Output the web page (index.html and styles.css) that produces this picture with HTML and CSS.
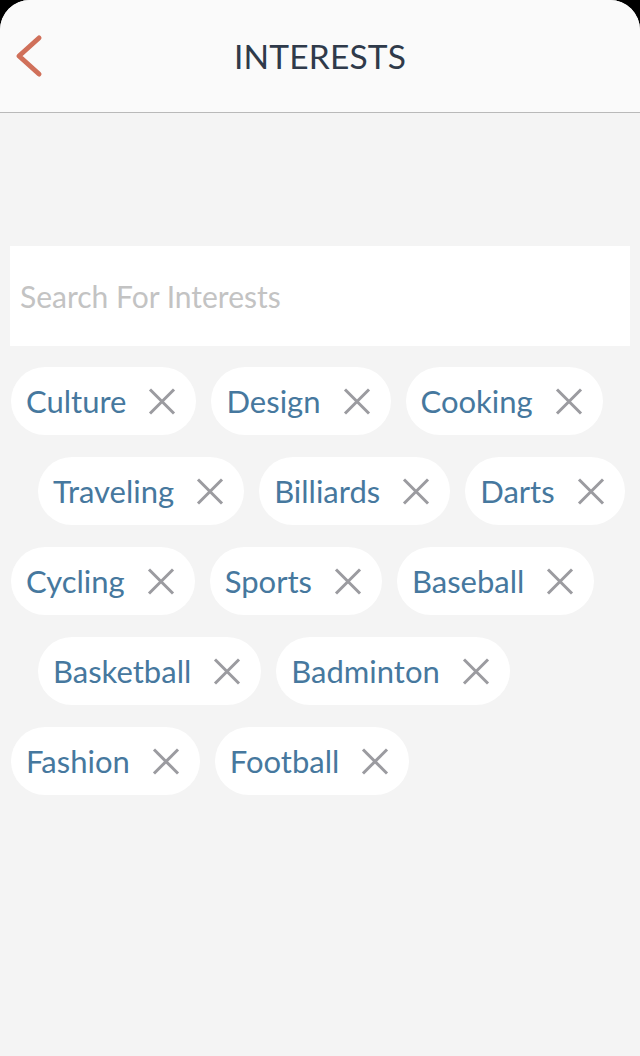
FILE: index.html
```html
<!DOCTYPE html>
<html lang="en">
<head>
  <meta charset="UTF-8">
  <title>Interests</title>
  <link rel="stylesheet" href="styles.css">
</head>
<body>
  <div class="screen">
    <header class="topbar">
      <button class="back" aria-label="Back">
        <svg width="30" height="44" viewBox="0 0 30 44">
          <path d="M26 4 L6 22 L26 40" fill="none" stroke="#d0705a" stroke-width="5" stroke-linecap="round" stroke-linejoin="round"/>
        </svg>
      </button>
      <h1>INTERESTS</h1>
    </header>

    <div class="search">
      <input type="text" placeholder="Search For Interests">
    </div>

    <div class="tags">
      <div class="row">
        <span class="tag">Culture<i class="x"></i></span>
        <span class="tag">Design<i class="x"></i></span>
        <span class="tag">Cooking<i class="x"></i></span>
      </div>
      <div class="row indent">
        <span class="tag">Traveling<i class="x"></i></span>
        <span class="tag">Billiards<i class="x"></i></span>
        <span class="tag">Darts<i class="x"></i></span>
      </div>
      <div class="row">
        <span class="tag">Cycling<i class="x"></i></span>
        <span class="tag">Sports<i class="x"></i></span>
        <span class="tag">Baseball<i class="x"></i></span>
      </div>
      <div class="row indent">
        <span class="tag">Basketball<i class="x"></i></span>
        <span class="tag">Badminton<i class="x"></i></span>
      </div>
      <div class="row">
        <span class="tag">Fashion<i class="x"></i></span>
        <span class="tag">Football<i class="x"></i></span>
      </div>
    </div>
  </div>
</body>
</html>
```

FILE: styles.css
```css
html {
  background: #000;
}
body {
  margin: 0;
  font-family: Lato, "Open Sans", sans-serif;
}
.screen {
  background: #f4f4f4;
  min-height: 1056px;
  border-radius: 30px 30px 0 0;
  overflow: hidden;
}
.topbar {
  position: relative;
  height: 112px;
  background: #fafafa;
  border-bottom: 1px solid #b9b9b9;
  display: flex;
  align-items: center;
  justify-content: center;
}
.topbar h1 {
  margin: 0;
  font-size: 33.5px;
  font-weight: 400;
  color: #2f3a4a;
  letter-spacing: 0.2px;
}
.back {
  position: absolute;
  left: 13px;
  top: 34px;
  padding: 0;
  border: none;
  background: none;
}
.back svg {
  display: block;
}
.search {
  margin: 133px 10px 0;
  background: #fff;
  height: 100px;
  display: flex;
  align-items: center;
}
.search input {
  flex: 1;
  border: none;
  outline: none;
  background: none;
  padding: 0 10px;
  font-family: inherit;
  font-size: 30px;
  color: #333;
}
.search input::placeholder {
  color: #c3c3c3;
}
.tags {
  padding: 21px 0 0 11px;
  display: flex;
  flex-direction: column;
  gap: 22px;
}
.row {
  display: flex;
  gap: 15px;
}
.row.indent {
  padding-left: 27px;
}
.tag {
  height: 68px;
  border-radius: 34px;
  background: #fff;
  display: flex;
  align-items: center;
  padding: 0 21px 0 15px;
  font-size: 31px;
  color: #46789e;
}
.x {
  position: relative;
  width: 26px;
  height: 26px;
  margin-left: 23px;
}
.x::before,
.x::after {
  content: "";
  position: absolute;
  left: -4px;
  top: 11.5px;
  width: 34px;
  height: 3px;
  background: #9b9ba0;
  transform: rotate(45deg);
}
.x::after {
  transform: rotate(-45deg);
}
```
